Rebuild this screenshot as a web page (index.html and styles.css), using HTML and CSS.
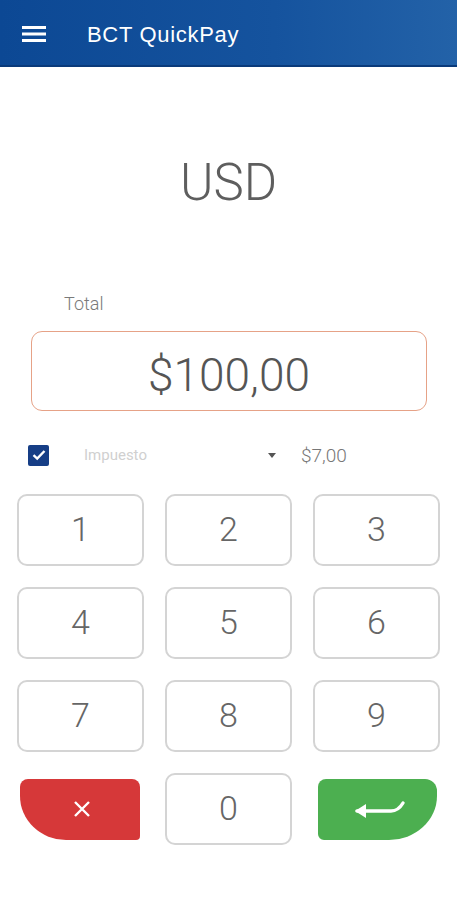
FILE: index.html
```html
<!DOCTYPE html>
<html lang="es">
<head>
<meta charset="utf-8">
<title>BCT QuickPay</title>
<link rel="stylesheet" href="styles.css">
</head>
<body>
<header class="appbar">
  <svg class="menu" width="24" height="16" viewBox="0 0 24 16"><rect x="0" y="0" width="24" height="3" fill="#fff"/><rect x="0" y="6.5" width="24" height="3" fill="#fff"/><rect x="0" y="13" width="24" height="3" fill="#fff"/></svg>
  <span class="title">BCT QuickPay</span>
</header>
<main class="content">
  <div class="currency">USD</div>
  <div class="total-label">Total</div>
  <div class="amount-box">$100,00</div>
  <div class="tax-row">
    <span class="check"><svg width="14" height="12" viewBox="0 0 14 12"><path d="M1.5 6.2 L5.2 9.6 L12.5 2" fill="none" stroke="#fff" stroke-width="2.4"/></svg></span>
    <span class="tax-name">Impuesto</span>
    <span class="caret"></span>
    <span class="tax-value">$7,00</span>
  </div>
  <div class="keypad">
    <button class="key">1</button>
    <button class="key">2</button>
    <button class="key">3</button>
    <button class="key">4</button>
    <button class="key">5</button>
    <button class="key">6</button>
    <button class="key">7</button>
    <button class="key">8</button>
    <button class="key">9</button>
    <button class="key action cancel"><svg width="20" height="20" viewBox="0 0 20 20"><path d="M3 3 L17 17 M17 3 L3 17" stroke="#fff" stroke-width="2.4" fill="none"/></svg></button>
    <button class="key">0</button>
    <button class="key action enter"><svg width="54" height="26" viewBox="0 0 54 26"><path d="M4 17 H38 C44 17 47 14 50 9" stroke="#fff" stroke-width="3.4" fill="none" stroke-linecap="round"/><path d="M2 17 L13 10 L13 24 Z" fill="#fff"/></svg></button>
  </div>
</main>
</body>
</html>
```
FILE: styles.css
```css
* { box-sizing: border-box; }
html, body { margin: 0; padding: 0; background: #fff; }
body { width: 457px; font-family: Roboto, "Liberation Sans", sans-serif; }

.appbar {
  height: 67px;
  background: linear-gradient(90deg, #0c4894 0%, #15539e 60%, #2362a8 100%);
  border-bottom: 2px solid #0a3a7a;
  display: flex;
  align-items: center;
  padding-left: 22px;
}
.menu { display: block; margin-top: 2px; }
.title {
  margin-left: 41px;
  color: #fff;
  font-family: "Liberation Sans", Arial, sans-serif;
  font-size: 22px;
  letter-spacing: 0.7px;
  margin-top: 5px;
}

.content { display: flex; flex-direction: column; }

.currency {
  margin-top: 86px;
  height: 60px;
  text-align: center;
  font-size: 51px;
  font-weight: 300;
  color: #5e5e5e;
  line-height: 60px;
}

.total-label {
  margin-top: 80px;
  margin-left: 64px;
  font-size: 18px;
  font-weight: 300;
  color: #7a7a7a;
  line-height: 22px;
}

.amount-box {
  margin: 16px 30px 0 31px;
  height: 80px;
  border: 1.5px solid #e6a287;
  border-radius: 11px;
  display: flex;
  align-items: center;
  justify-content: center;
  font-size: 46px;
  font-weight: 300;
  color: #555;
  padding-top: 8px;
}

.tax-row {
  margin-top: 31px;
  height: 26px;
  display: flex;
  align-items: center;
  padding-left: 28px;
}
.check {
  width: 21px;
  height: 21px;
  background: #163e86;
  border-radius: 2px;
  display: flex;
  align-items: center;
  justify-content: center;
}
.tax-name {
  margin-left: 35px;
  width: 184px;
  font-size: 15px;
  color: #d0d0d0;
  font-weight: 400;
}
.caret {
  width: 0; height: 0;
  border-left: 4.5px solid transparent;
  border-right: 4.5px solid transparent;
  border-top: 5px solid #555;
}
.tax-value {
  margin-left: 25px;
  font-size: 19px;
  font-weight: 300;
  color: #777;
}

.keypad {
  margin-top: 26px;
  margin-left: 17px;
  display: grid;
  grid-template-columns: repeat(3, 127px);
  grid-auto-rows: 72px;
  column-gap: 21px;
  row-gap: 21px;
}
.key {
  font-family: inherit;
  border: 2px solid #d4d4d4;
  border-radius: 10px;
  background: #fff;
  font-size: 34px;
  font-weight: 300;
  color: #666;
  display: flex;
  align-items: center;
  justify-content: center;
  padding: 0 0 2px 0;
}
.action {
  border: none;
  align-self: center;
  height: 61px;
  padding: 0;
}
.cancel {
  background: #d63839;
  width: 120px;
  margin-left: 3px;
  border-radius: 8px 8px 4px 46px / 8px 8px 4px 44px;
}
.enter {
  background: #4caf50;
  width: 119px;
  margin-left: 5px;
  border-radius: 8px 12px 48px 6px / 8px 12px 44px 6px;
}
.cancel svg { margin-left: 4px; }
.enter svg { margin-left: 4px; margin-top: -4px; }
```
